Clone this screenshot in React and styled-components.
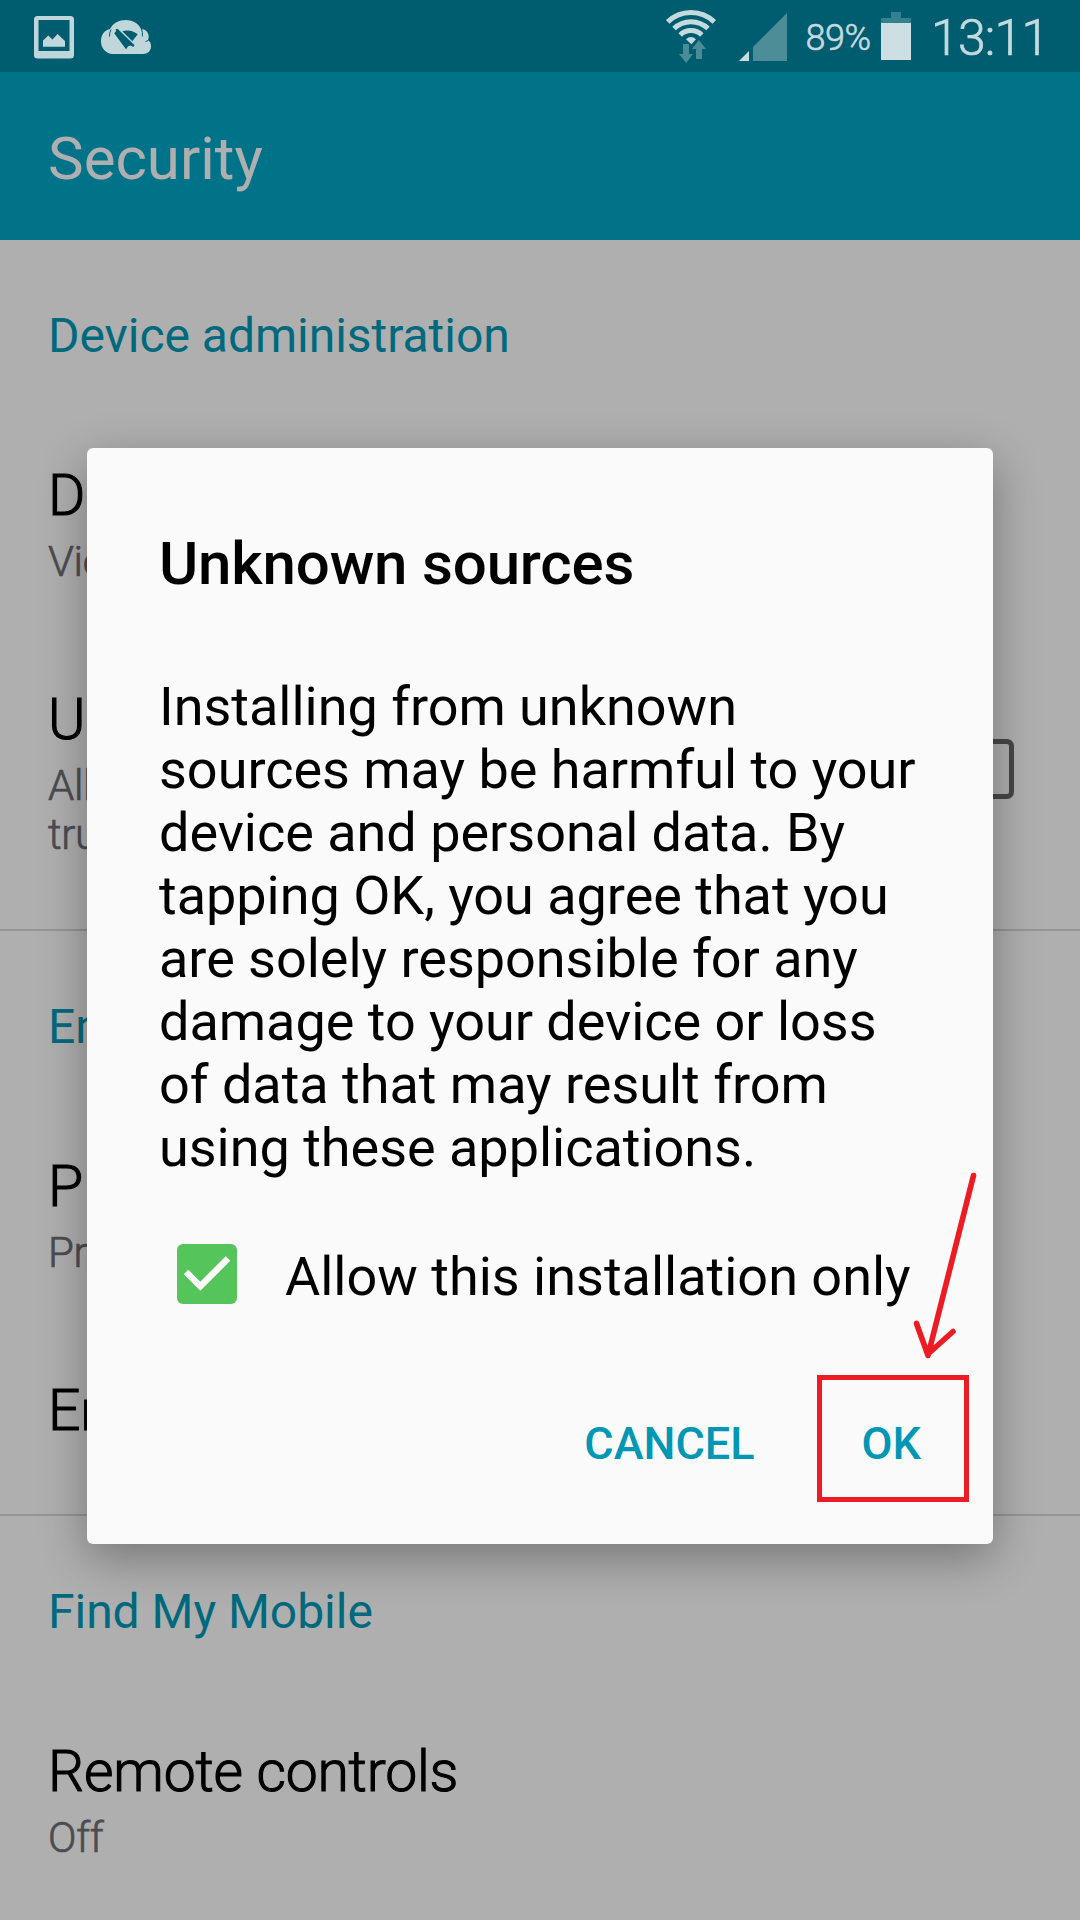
import React from "react";
import styled, { createGlobalStyle } from "styled-components";

const GlobalStyle = createGlobalStyle`
  *, *::before, *::after { box-sizing: border-box; }
  body {
    margin: 0;
    background: #afafaf;
    font-family: Roboto, "Noto Sans", sans-serif;
  }
`;

const Screen = styled.div`
  position: relative;
  display: flex;
  flex-direction: column;
  width: 1080px;
  height: 1920px;
  overflow: hidden;
  background: #afafaf;
`;

const StatusBar = styled.header`
  display: flex;
  justify-content: space-between;
  align-items: flex-start;
  flex: none;
  height: 72px;
  padding: 0 31.6px 0 34px;
  background: #005c6f;
  color: #c4dade;
`;

const StatusGroup = styled.div`
  display: flex;
  align-items: flex-start;
  gap: ${({ $gap }) => $gap || 0}px;
`;

const StatusIcon = styled.svg`
  display: block;
  flex: none;
  margin-right: ${({ $after }) => $after || 0}px;
`;

const BatteryLevel = styled.span`
  margin-right: 10.6px;
  font-size: 36px;
  font-weight: 300;
  line-height: 77px;
  letter-spacing: -0.4px;
  -webkit-text-stroke: 0.6px currentColor;
`;

const Clock = styled.time`
  font-size: 50px;
  font-weight: 300;
  line-height: 76px;
  letter-spacing: -0.8px;
  -webkit-text-stroke: 0.7px currentColor;
`;

const AppBar = styled.div`
  display: flex;
  align-items: center;
  flex: none;
  height: 168px;
  padding: 5px 48px 0;
  background: #007389;
`;

const AppTitle = styled.h1`
  margin: 0;
  font-size: 60px;
  font-weight: 400;
  line-height: 70px;
  color: #afafaf;
`;

const Section = styled.section`
  display: flex;
  flex-direction: column;
  flex: none;
  border-bottom: ${({ $last }) => ($last ? "0" : "2px solid #959595")};
`;

const SectionTitle = styled.h2`
  margin: 0;
  padding: 68px 48px;
  font-size: 48px;
  font-weight: 400;
  line-height: 56px;
  letter-spacing: -0.03px;
  color: #00697d;
`;

const Row = styled.div`
  display: flex;
  justify-content: space-between;
  align-items: flex-start;
  padding: 31px 66px 70px 48px;
`;

const RowText = styled.div`
  display: flex;
  flex-direction: column;
  gap: 8px;
`;

const RowTitle = styled.div`
  font-size: 57px;
  font-weight: 300;
  line-height: 66px;
  letter-spacing: -0.2px;
  color: #000;
  -webkit-text-stroke: 1.1px currentColor;
`;

const RowSummary = styled.div`
  font-size: 42px;
  font-weight: 300;
  line-height: 49px;
  letter-spacing: -0.3px;
  white-space: pre-line;
  color: #4b4c50;
  -webkit-text-stroke: 0.7px currentColor;
`;

const EmptyCheckbox = styled.span`
  flex: none;
  width: 60px;
  height: 60px;
  margin-top: 52px;
  border: 5px solid #474747;
  border-radius: 7px;
`;

const Dialog = styled.div`
  position: absolute;
  left: 87px;
  top: 448px;
  display: flex;
  flex-direction: column;
  width: 906px;
  height: 1096px;
  padding: 80px 72px 0;
  border-radius: 6px;
  background: #fafafa;
  color: #000;
  box-shadow: 0 14px 48px rgba(0, 0, 0, 0.33);
`;

const DialogTitle = styled.h2`
  margin: 0;
  font-size: 60px;
  font-weight: 500;
  line-height: 71px;
  letter-spacing: -0.15px;
`;

const DialogBody = styled.p`
  margin: 76px 0 0;
  font-size: 54px;
  line-height: 63px;
  letter-spacing: -0.02px;
`;

const CheckRow = styled.label`
  display: flex;
  align-items: flex-start;
  gap: 48px;
  margin: 65px -20px 0 18px;
`;

const CheckedBox = styled.span`
  display: flex;
  flex: none;
  width: 60px;
  height: 60px;
  border-radius: 6px;
  background: #55c45a;
`;

const CheckLabel = styled.span`
  padding-top: 1px;
  font-size: 54px;
  line-height: 63px;
  white-space: nowrap;
`;

const Actions = styled.div`
  display: flex;
  justify-content: flex-end;
  gap: 107px;
  margin-top: 109px;
`;

const ActionButton = styled.button`
  padding: 0;
  border: 0;
  background: none;
  font-family: inherit;
  font-size: 45px;
  font-weight: 500;
  line-height: 53px;
  color: #0097b4;
`;

const Annotation = styled.svg`
  position: absolute;
  left: 800px;
  top: 1160px;
  pointer-events: none;
`;

const sections = [
  {
    title: "Device administration",
    rows: [
      { title: "D", summary: "Vie" },
      { title: "U", summary: "All\ntru", checkbox: true },
    ],
  },
  {
    title: "En",
    rows: [{ title: "P", summary: "Pr" }, { title: "En" }],
  },
  {
    title: "Find My Mobile",
    rows: [{ title: "Remote controls", summary: "Off" }],
  },
];

const PictureIcon = () => (
  <StatusIcon width="40" height="72" viewBox="34 0 40 72">
    <path
      fill="#bfd6da"
      fillRule="evenodd"
      d="M37.500 16H70.500Q74 16 74 19.500V55Q74 58.500 70.500 58.500H37.500Q34 58.500 34 55V19.500Q34 16 37.500 16ZM38.500 20V51H69.500V20Z"
    />
    <path fill="#bfd6da" d="M43 40.500L48.300 35.500L52.400 39.600L57.600 34L65 41V46.800H43Z" />
  </StatusIcon>
);

const CloudIcon = () => (
  <StatusIcon width="50" height="72" viewBox="101 0 50 72">
    <path
      fill="#bfd6da"
      d="M112.500 54A11.500 12.500 0 0 1 101 41.500C101 34.500 104.500 30 110 29C113 23 119 20 126 20C133 20 138.500 23.500 141 29C145.500 29 148.700 32.500 148.700 36.500C148.700 38 148.400 39.300 148 40.300C150 41.300 151 43.500 151 46.500C151 51 147.500 54 143 54Z"
    />
    <path
      fill="none"
      stroke="#005c6f"
      strokeWidth="1"
      d="M111 29.500Q109.300 32.500 109.500 36.500M141.400 29Q143 32 142.400 36.500M148.500 40Q147 41.300 145.500 41.500"
    />
    <path
      fill="#005c6f"
      d="M114.200 33.300L116 31.300L115.800 29.300L117.500 28.700L134.600 45.300L133.200 47L130.800 45.600L128.200 46.300L126 49.300Z"
    />
    <path fill="#005c6f" d="M122.300 31.200C128 29.600 133.500 30.800 137.700 34.300L132.300 41.200Z" />
  </StatusIcon>
);

const WifiIcon = () => (
  <StatusIcon width="54" height="72" viewBox="664 0 54 72" $after={20}>
    <g fill="none" stroke="#c4dade" strokeWidth="5">
      <path d="M667.700 21.900A33.500 33.500 0 0 1 714.300 21.900" />
      <path d="M674 28.500A24.500 24.500 0 0 1 708 28.500" />
      <path d="M680.200 35A15.500 15.500 0 0 1 701.800 35" />
    </g>
    <path fill="#c4dade" d="M686 39.200Q691 35 696 39.200L691.300 44.300Z" />
    <path fill="#4b8b97" d="M683 44H689V54H693L686.200 63L679 54H683Z" />
    <path fill="#4b8b97" d="M696 59V49H692L698.800 40L706 49H702V59Z" />
  </StatusIcon>
);

const SignalIcon = () => (
  <StatusIcon width="50" height="72" viewBox="738 0 50 72" $after={17}>
    <path fill="#4d8d98" d="M753 61V47L787 13V61Z" />
    <path fill="#c8dde0" d="M739 61L749 51V61Z" />
  </StatusIcon>
);

const BatteryIcon = () => (
  <StatusIcon width="30" height="72" viewBox="881 0 30 72" $after={19.6}>
    <path fill="#35808e" d="M891 12H901V18H911V23H881V18H891Z" />
    <path fill="#cddfe3" d="M881 23H911V60H881Z" />
  </StatusIcon>
);

const CheckMark = () => (
  <svg width="60" height="60" viewBox="0 0 60 60">
    <path fill="none" stroke="#fafafa" strokeWidth="6.500" d="M9 28L23.300 42.200L51 14.500" />
  </svg>
);

export default function App() {
  return (
    <Screen>
      <GlobalStyle />
      <StatusBar>
        <StatusGroup $gap={27}>
          <PictureIcon />
          <CloudIcon />
        </StatusGroup>
        <StatusGroup>
          <WifiIcon />
          <SignalIcon />
          <BatteryLevel>89%</BatteryLevel>
          <BatteryIcon />
          <Clock>13:11</Clock>
        </StatusGroup>
      </StatusBar>
      <AppBar>
        <AppTitle>Security</AppTitle>
      </AppBar>
      {sections.map((section, i) => (
        <Section key={section.title} $last={i === sections.length - 1}>
          <SectionTitle>{section.title}</SectionTitle>
          {section.rows.map((row) => (
            <Row key={row.title}>
              <RowText>
                <RowTitle>{row.title}</RowTitle>
                {row.summary && <RowSummary>{row.summary}</RowSummary>}
              </RowText>
              {row.checkbox && <EmptyCheckbox />}
            </Row>
          ))}
        </Section>
      ))}
      <Dialog role="dialog">
        <DialogTitle>Unknown sources</DialogTitle>
        <DialogBody>
          Installing from unknown sources may be harmful to your device and
          personal data. By tapping OK, you agree that you are solely
          responsible for any damage to your device or loss of data that may
          result from using these applications.
        </DialogBody>
        <CheckRow>
          <CheckedBox>
            <CheckMark />
          </CheckedBox>
          <CheckLabel>Allow this installation only</CheckLabel>
        </CheckRow>
        <Actions>
          <ActionButton>CANCEL</ActionButton>
          <ActionButton>OK</ActionButton>
        </Actions>
      </Dialog>
      <Annotation width="180" height="350" viewBox="800 1160 180 350">
        <g fill="none" stroke="#ed1c24" strokeWidth="5">
          <path d="M819.500 1377.500H966.500V1499.500H819.500Z" />
          <path
            strokeWidth="5.600"
            strokeLinecap="round"
            strokeLinejoin="round"
            d="M973.500 1175.500L928 1355.500L916.500 1323.500M928 1354L953 1331.500"
          />
        </g>
      </Annotation>
    </Screen>
  );
}
